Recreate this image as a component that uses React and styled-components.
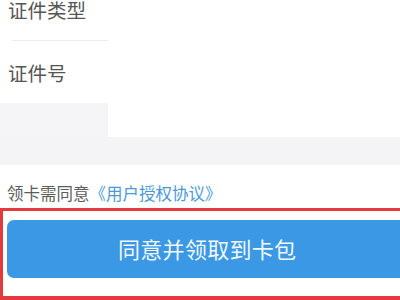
import React from 'react';
import styled, { createGlobalStyle } from 'styled-components';

const GlobalStyle = createGlobalStyle`
  html, body {
    margin: 0;
    padding: 0;
    background: #ffffff;
    font-family: "Noto Sans CJK SC", "Noto Sans", sans-serif;
  }
`;

const Page = styled.div`
  width: 400px;
  height: 300px;
  overflow: hidden;
  display: flex;
  flex-direction: column;
  background: #ffffff;
`;

const Form = styled.div`
  display: flex;
  flex-direction: column;
  margin-top: -21px;
`;

const FieldRow = styled.div`
  height: ${p => p.$h || 62}px;
  display: flex;
  align-items: center;
  padding-left: 8px;
  font-size: 19.5px;
  color: #555555;
`;

const Divider = styled.div`
  height: 1px;
  width: 96px;
  margin-left: 12px;
  background: #eeeeef;
`;

const SplitRow = styled.div`
  height: 34px;
  display: flex;
`;

const SplitCell = styled.div`
  width: ${p => p.$w}px;
  flex: ${p => (p.$w ? 'none' : 1)};
  background: ${p => p.$bg};
`;

const Band = styled.div`
  height: 28px;
  background: #f4f4f6;
`;

const Agreement = styled.div`
  height: 43px;
  display: flex;
  align-items: center;
  padding: 12px 0 0 7px;
  font-size: 16.5px;
  color: #5c5c5c;
  white-space: nowrap;
  box-sizing: border-box;
`;

const Link = styled.span`
  color: #4a9ad9;
`;

const Highlight = styled.div`
  border: 3px solid #e5383f;
  border-bottom-width: 4px;
  margin-right: -40px;
  padding: 9px 4px 18px;
  box-sizing: border-box;
  height: 92px;
`;

const Button = styled.button`
  width: 100%;
  height: 58px;
  border: none;
  border-radius: 7px;
  background: #3a98e4;
  color: #f2f7fc;
  font-family: "Noto Sans CJK SC", "Noto Sans", sans-serif;
  font-size: 22px;
  letter-spacing: 0.3px;
  display: flex;
  align-items: center;
  padding: 0 0 2px 111px;
  cursor: pointer;
`;

export default function App() {
  return (
    <>
      <GlobalStyle />
      <Page>
        <Form>
          <FieldRow $h={61}>证件类型</FieldRow>
          <Divider />
          <FieldRow>证件号</FieldRow>
        </Form>
        <SplitRow>
          <SplitCell $w={108} $bg="#f5f5f7" />
          <SplitCell $bg="#ffffff" />
        </SplitRow>
        <Band />
        <Agreement>
          领卡需同意<Link>《用户授权协议》</Link>
        </Agreement>
        <Highlight>
          <Button>同意并领取到卡包</Button>
        </Highlight>
      </Page>
    </>
  );
}
